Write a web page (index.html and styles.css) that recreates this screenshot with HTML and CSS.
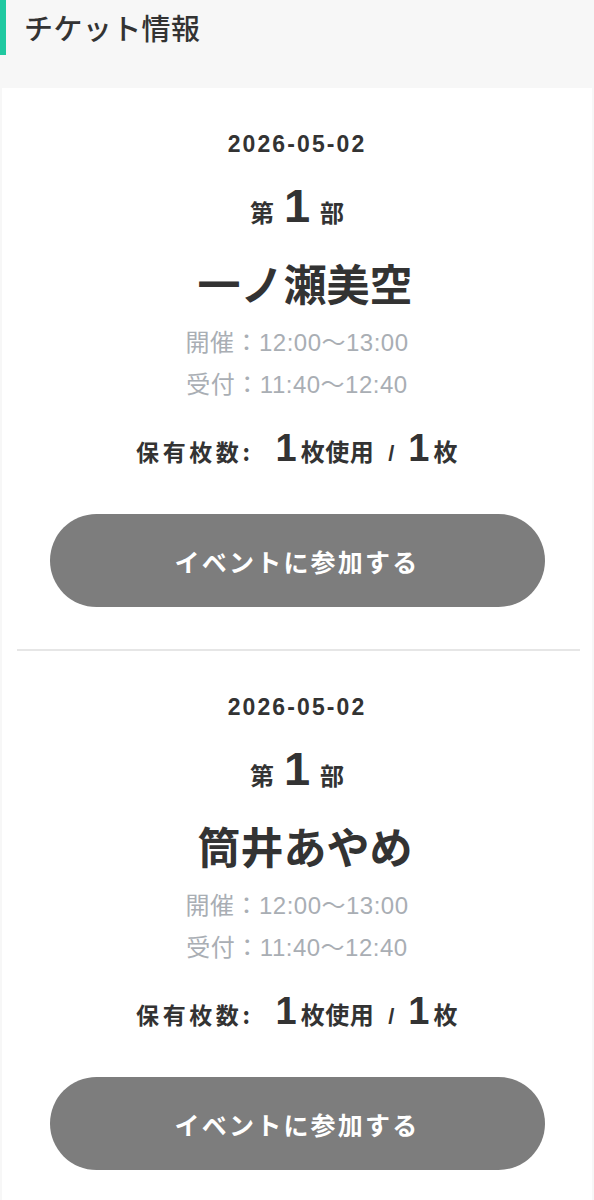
FILE: index.html
```html
<!DOCTYPE html>
<html lang="ja">
<head>
<meta charset="utf-8">
<title>チケット情報</title>
<link rel="stylesheet" href="styles.css">
</head>
<body>
<header class="page-header">
  <h1 class="page-title">チケット情報</h1>
</header>
<main class="card">
  <section class="ticket">
    <div class="ticket-date">2026-05-02</div>
    <div class="ticket-part"><span class="part-label">第</span><span class="part-num">1</span><span class="part-label">部</span></div>
    <div class="ticket-name">一ノ瀬美空</div>
    <div class="ticket-times">
      <div class="time-row">開催：12:00〜13:00</div>
      <div class="time-row">受付：11:40〜12:40</div>
    </div>
    <div class="ticket-count"><span class="count-label">保有枚数:</span><span class="count-num">1</span><span class="count-unit">枚使用</span><span class="count-sep">/</span><span class="count-num">1</span><span class="count-unit">枚</span></div>
    <button class="join-btn" type="button">イベントに参加する</button>
  </section>
  <hr class="divider">
  <section class="ticket">
    <div class="ticket-date">2026-05-02</div>
    <div class="ticket-part"><span class="part-label">第</span><span class="part-num">1</span><span class="part-label">部</span></div>
    <div class="ticket-name">筒井あやめ</div>
    <div class="ticket-times">
      <div class="time-row">開催：12:00〜13:00</div>
      <div class="time-row">受付：11:40〜12:40</div>
    </div>
    <div class="ticket-count"><span class="count-label">保有枚数:</span><span class="count-num">1</span><span class="count-unit">枚使用</span><span class="count-sep">/</span><span class="count-num">1</span><span class="count-unit">枚</span></div>
    <button class="join-btn" type="button">イベントに参加する</button>
  </section>
</main>
</body>
</html>
```
FILE: styles.css
```css
* { box-sizing: border-box; }

body {
  margin: 0;
  background: #f7f7f7;
  color: #333333;
  font-family: "Liberation Sans", "Noto Sans CJK JP", sans-serif;
}

.page-header {
  height: 88px;
  background: #f7f7f7;
}

.page-title {
  margin: 0;
  height: 55px;
  border-left: 6px solid #20c9a1;
  padding-left: 18px;
  font-family: "Noto Sans CJK JP", sans-serif;
  font-size: 29px;
  font-weight: 500;
  letter-spacing: 0.4px;
  line-height: 55px;
  color: #333333;
}

.card {
  background: #ffffff;
  margin: 0 2px;
  display: flex;
  flex-direction: column;
}

.ticket {
  display: flex;
  flex-direction: column;
  align-items: center;
  padding: 41px 0 42px;
  text-align: center;
}

.divider {
  margin: 0 12px 0 15px;
  border: 0;
  border-top: 2px solid #e6e6e6;
  height: 0;
}

.ticket-date {
  font-size: 23px;
  font-weight: 700;
  letter-spacing: 2.1px;
  line-height: 30px;
}

.ticket-part {
  margin-top: 21px;
  height: 52px;
  display: flex;
  align-items: baseline;
  justify-content: center;
  gap: 10px;
  line-height: 52px;
}

.part-label {
  font-family: "Noto Sans CJK JP", sans-serif;
  font-size: 24px;
  font-weight: 700;
}

.part-num {
  font-size: 47px;
  font-weight: 700;
}

.ticket-name {
  margin-top: 22px;
  padding-left: 16px;
  font-family: "Noto Sans CJK JP", sans-serif;
  font-size: 43px;
  font-weight: 700;
  line-height: 56px;
}

.ticket-times {
  margin-top: 12px;
  display: flex;
  flex-direction: column;
  color: #a9aeb4;
}

.time-row {
  font-size: 24px;
  line-height: 42px;
  letter-spacing: 0.5px;
}

.ticket-count {
  margin-top: 17px;
  height: 50px;
  display: flex;
  align-items: baseline;
  justify-content: center;
  line-height: 50px;
  font-weight: 700;
}

.count-label {
  font-family: "Noto Sans CJK JP", sans-serif;
  font-size: 23px;
  letter-spacing: 3.6px;
  margin-right: 22px;
}

.count-num {
  font-size: 38px;
  margin-right: 4px;
}

.count-unit {
  font-family: "Noto Sans CJK JP", sans-serif;
  font-size: 24px;
  letter-spacing: 0.5px;
}

.count-sep {
  font-size: 22px;
  margin: 0 14px;
}

.join-btn {
  margin-top: 41px;
  width: 495px;
  height: 93px;
  border: 0;
  border-radius: 47px;
  background: #7d7d7d;
  color: #ffffff;
  font-family: "Noto Sans CJK JP", sans-serif;
  font-size: 25px;
  font-weight: 700;
  letter-spacing: 2.2px;
  cursor: pointer;
}
```
